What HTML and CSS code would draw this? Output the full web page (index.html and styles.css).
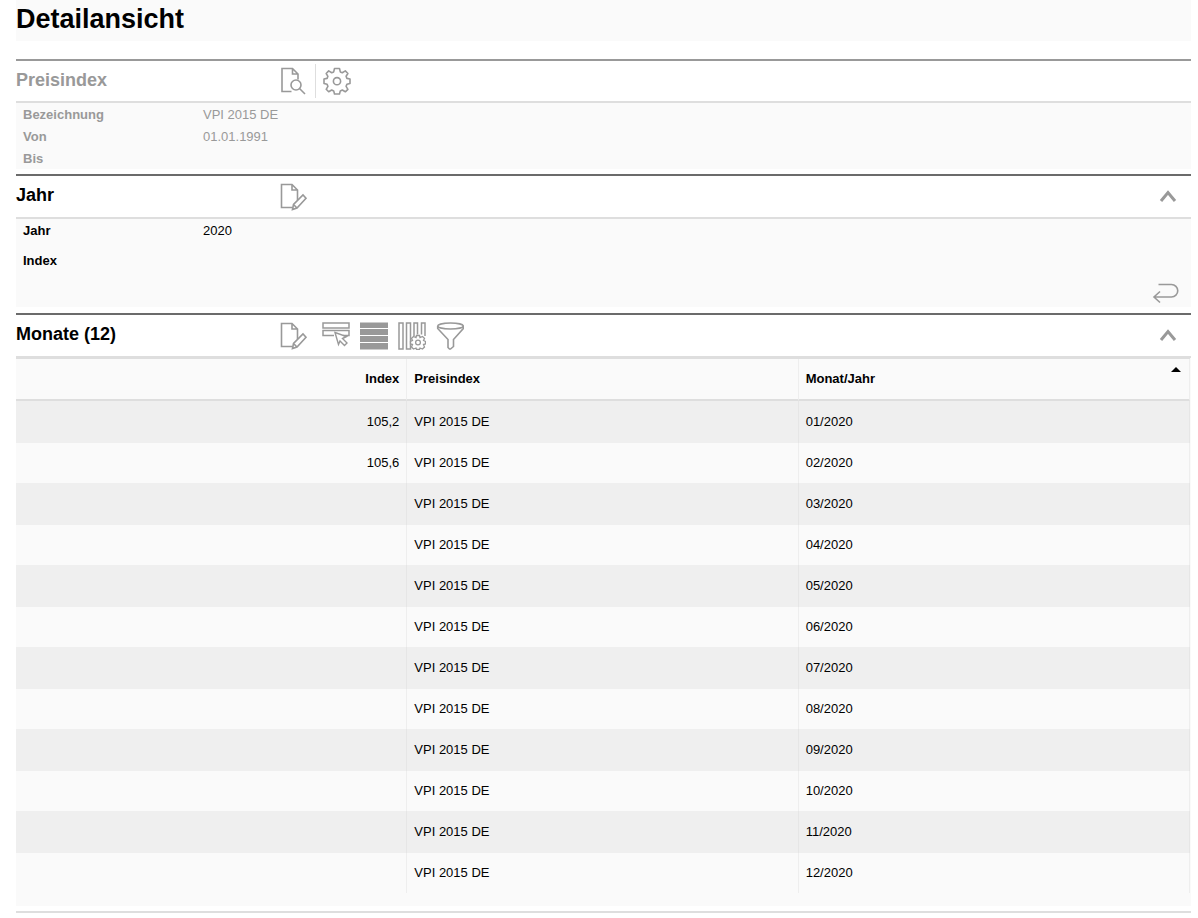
FILE: index.html
```html
<!DOCTYPE html>
<html lang="de">
<head>
<meta charset="utf-8">
<meta name="viewport" content="width=device-width, initial-scale=1">
<title>Detailansicht</title>
<link rel="stylesheet" href="styles.css">
</head>
<body>
<main class="page">
  <h1 class="page-title">Detailansicht</h1>

  <section class="section section--muted">
    <header class="section-header">
      <h2 class="section-title">Preisindex</h2>
      <div class="toolbar">
        <button class="tool" type="button" aria-label="Vorschau">
          <svg class="icon" viewBox="0 0 28 28"><path d="M11.500 24.500H2V1.500H12.500L18 7V12.500M12.500 1.500V7H18"/><circle cx="16" cy="18" r="5"/><path d="M19.500 21.500L25 27"/></svg>
        </button>
        <span class="tool-divider"></span>
        <button class="tool" type="button" aria-label="Einstellungen">
          <svg class="icon" viewBox="0 0 28 28"><path d="M11.500 1.500H16.500L17.300 4.900L19.300 5.700L22.300 3.900L24.900 6.500L23.100 9.300L23.900 11.400L27 12V16.500L23.900 17.300L23.100 19.400L24.900 22.300L22.300 24.800L19.300 23L17.300 23.900L16.500 27H11.500L10.700 23.900L8.700 23L5.700 24.800L3.200 22.300L4.900 19.400L4.100 17.300L1 16.500V12L4.100 11.400L4.900 9.300L3.200 6.500L5.700 3.900L8.700 5.700L10.700 4.900Z" stroke-linejoin="round"/><circle cx="14" cy="14.200" r="3.600"/></svg>
        </button>
      </div>
    </header>
    <dl class="fields">
      <div class="field"><dt>Bezeichnung</dt><dd>VPI 2015 DE</dd></div>
      <div class="field"><dt>Von</dt><dd>01.01.1991</dd></div>
      <div class="field"><dt>Bis</dt><dd></dd></div>
    </dl>
  </section>

  <section class="section section--year">
    <header class="section-header">
      <h2 class="section-title">Jahr</h2>
      <div class="toolbar">
        <button class="tool" type="button" aria-label="Jahr bearbeiten">
          <svg class="icon" viewBox="0 0 28 28"><path d="M12.500 24.500H1.500V1.500H12L17.500 7V17M12 1.500V7H17.500"/><path d="M12.500 26.500L13.500 21.500L23 12L26 15.200L17 25ZM13.500 21.500L17 25"/></svg>
        </button>
      </div>
      <button class="toggle" type="button" aria-label="Jahr einklappen">
        <svg class="chevron" viewBox="0 0 18 14"><path d="M2 12L9 3.500L16 12"/></svg>
      </button>
    </header>
    <dl class="fields fields--spaced">
      <div class="field"><dt>Jahr</dt><dd>2020</dd></div>
      <div class="field"><dt>Index</dt><dd></dd></div>
    </dl>
    <div class="section-actions">
      <button class="tool" type="button" aria-label="Zurück">
        <svg class="icon" viewBox="0 0 28 28"><path d="M6.500 5.500H19.500A6.200 6.200 0 0 1 19.500 18H2M8 12.500L2 18L8 23.500"/></svg>
      </button>
    </div>
  </section>

  <section class="section section--months">
    <header class="section-header">
      <h2 class="section-title">Monate (12)</h2>
      <div class="toolbar">
        <button class="tool tool--edit" type="button" aria-label="Monate bearbeiten">
          <svg class="icon" viewBox="0 0 28 28"><path d="M12.500 24.500H1.500V1.500H12L17.500 7V17M12 1.500V7H17.500"/><path d="M12.500 26.500L13.500 21.500L23 12L26 15.200L17 25ZM13.500 21.500L17 25"/></svg>
        </button>
        <button class="tool" type="button" aria-label="Zeile auswählen">
          <svg class="icon" viewBox="0 0 28 28"><path d="M12 13.500H1V8.500H27V13.500H21M1 1H27V6H1Z" stroke-width="1.500"/><path d="M13 10.500L24.500 14.500L20.500 16.500L25 21L22.500 23.500L18 19L16.500 22.500Z" stroke-width="1.400"/></svg>
        </button>
        <button class="tool" type="button" aria-label="Alle Zeilen">
          <svg class="icon" viewBox="0 0 28 28"><path class="solid" d="M0 0.500H28V6H0ZM0 7H28V13H0ZM0 14H28V20H0ZM0 21H28V27.500H0Z"/></svg>
        </button>
        <button class="tool" type="button" aria-label="Spalten konfigurieren">
          <svg class="icon" viewBox="0 0 28 28"><path d="M1 1H5V27H1ZM8.500 1H12.500V27H8.500ZM16 14V1H19.500V12.500M23.500 12.500V1H27V14" stroke-width="1.500"/><path d="M18.500 13.500H21.500L22 15.500L24.500 14.500L26.500 16.500L25.500 18.500L27.500 19.500V22L25.500 22.500L26.500 25L24.500 27L22 26L21.500 27.500H18.500L18 26L15.500 27L13.500 25L14.500 22.500L12.500 22V19.500L14.500 18.500L13.500 16.500L15.500 14.500L18 15.500Z" class="gear"/><circle cx="20" cy="20.500" r="2.400" stroke-width="1.300"/></svg>
        </button>
        <button class="tool" type="button" aria-label="Filter">
          <svg class="icon" viewBox="0 0 28 28"><ellipse cx="14.500" cy="4" rx="12.800" ry="3"/><path d="M1.700 4V6.500L12 17.500V25.500L13.500 27H14.500L17.500 24.500V17.500L27.300 6.500V4"/></svg>
        </button>
      </div>
      <button class="toggle" type="button" aria-label="Monate einklappen">
        <svg class="chevron" viewBox="0 0 18 14"><path d="M2 12L9 3.500L16 12"/></svg>
      </button>
    </header>
    <div class="table-area">
      <table class="table">
        <thead>
          <tr>
            <th class="number" scope="col">Index</th>
            <th scope="col">Preisindex</th>
            <th class="sorted" scope="col" aria-sort="ascending">Monat/Jahr</th>
          </tr>
        </thead>
        <tbody>
          <tr><td class="number">105,2</td><td>VPI 2015 DE</td><td>01/2020</td></tr>
          <tr><td class="number">105,6</td><td>VPI 2015 DE</td><td>02/2020</td></tr>
          <tr><td class="number"></td><td>VPI 2015 DE</td><td>03/2020</td></tr>
          <tr><td class="number"></td><td>VPI 2015 DE</td><td>04/2020</td></tr>
          <tr><td class="number"></td><td>VPI 2015 DE</td><td>05/2020</td></tr>
          <tr><td class="number"></td><td>VPI 2015 DE</td><td>06/2020</td></tr>
          <tr><td class="number"></td><td>VPI 2015 DE</td><td>07/2020</td></tr>
          <tr><td class="number"></td><td>VPI 2015 DE</td><td>08/2020</td></tr>
          <tr><td class="number"></td><td>VPI 2015 DE</td><td>09/2020</td></tr>
          <tr><td class="number"></td><td>VPI 2015 DE</td><td>10/2020</td></tr>
          <tr><td class="number"></td><td>VPI 2015 DE</td><td>11/2020</td></tr>
          <tr><td class="number"></td><td>VPI 2015 DE</td><td>12/2020</td></tr>
        </tbody>
      </table>
    </div>
  </section>
</main>
</body>
</html>
```
FILE: styles.css
```css
* {
  box-sizing: border-box;
}

body {
  margin: 0;
  background: #fff;
  color: #000;
  font: 13px/22px "Liberation Sans", Arial, sans-serif;
}

.page {
  margin: 0 7px 5px 16px;
  border-bottom: 2px solid #dedede;
  padding-bottom: 5px;
}

.page-title {
  margin: 0 0 18px;
  padding: 3px 0 6px;
  background: #fafafa;
  font-size: 27px;
  line-height: 32px;
}

.section {
  border-top: 2px solid #6b6b6b;
}

.section--muted {
  margin-bottom: 5px;
  border-top-color: #999;
  color: #999;
}

.section--year {
  margin-bottom: 6px;
}

.section-header {
  display: flex;
  align-items: center;
  min-height: 42px;
  border-bottom: 2px solid #dedede;
}

.section--year .section-header,
.section--months .section-header {
  min-height: 43px;
}

.section-title {
  flex: 0 0 264px;
  margin: 0;
  padding-bottom: 3px;
  font-size: 18px;
  line-height: 24px;
}

.toolbar {
  display: flex;
  align-items: center;
  gap: 10px;
}

.tool,
.toggle {
  display: flex;
  margin: 0;
  padding: 0;
  border: 0;
  background: none;
  color: #999;
  cursor: pointer;
}

.tool--edit {
  margin-right: 4px;
}

.toggle {
  margin-left: auto;
  padding: 0 14px 2px;
}

.section--muted .toolbar {
  gap: 7px;
}

.tool-divider {
  width: 1px;
  height: 34px;
  background: #dedede;
}

.icon {
  width: 28px;
  height: 28px;
  fill: none;
  stroke: currentColor;
  stroke-width: 1.6;
}

.icon .solid {
  fill: currentColor;
  stroke: none;
}

.icon .gear {
  fill: #fff;
  stroke-width: 1.3;
}

.chevron {
  width: 18px;
  height: 14px;
  fill: none;
  stroke: currentColor;
  stroke-width: 3;
}

.fields {
  margin: 0;
  background: #fafafa;
}

.field {
  display: flex;
  height: 22px;
  padding: 1px 0 0 7px;
}

.field dt {
  width: 180px;
  font-weight: bold;
}

.field dd {
  margin: 0;
}

.fields--spaced .field {
  height: 30px;
}

.section-actions {
  display: flex;
  justify-content: flex-end;
  padding-right: 11px;
  background: #fafafa;
}

.table-area {
  padding-bottom: 13px;
  background: #fafafa;
}

.table {
  width: calc(100% - 1px);
  border-top: 1px solid #dedede;
  border-collapse: separate;
  border-spacing: 0;
  table-layout: fixed;
}

.table th,
.table td {
  height: 40px;
  padding: 0 7px;
  border-right: 1px solid #eee;
  text-align: left;
}

.table th {
  height: 42px;
  border-bottom: 2px solid #dedede;
}

.table .number {
  text-align: right;
}

.table th.number {
  width: calc(100% / 3 + 1px);
}

.table tbody tr:nth-child(odd) td {
  height: 42px;
  border-right-color: #e6e6e6;
  background: #efefef;
}

.table .sorted {
  position: relative;
}

.sorted::after {
  content: "";
  position: absolute;
  top: 8px;
  right: 8px;
  border: 5px solid transparent;
  border-top: 0;
  border-bottom-color: #000;
}
```
